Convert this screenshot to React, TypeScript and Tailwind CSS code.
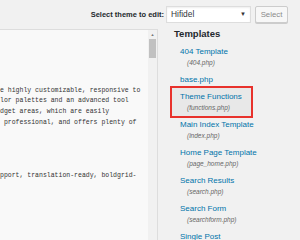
import React from 'react';

const templates = [
  { name: '404 Template', file: '404.php' },
  { name: 'base.php' },
  { name: 'Theme Functions', file: 'functions.php', active: true },
  { name: 'Main Index Template', file: 'index.php' },
  { name: 'Home Page Template', file: 'page_home.php' },
  { name: 'Search Results', file: 'search.php' },
  { name: 'Search Form', file: 'searchform.php' },
  { name: 'Single Post', file: 'single.php' },
];

const codeLines = [
  '',
  '',
  '',
  '',
  '',
  'e highly customizable, responsive to',
  'lor palettes and an advanced tool',
  'dget areas, which are easily',
  ' professional, and offers plenty of',
  '',
  '',
  '',
  '',
  'pport, translation-ready, boldgrid-',
  '',
  '',
  '',
  '',
  '',
];

const App: React.FC = () => {
  return (
    <div className="w-[300px] h-[240px] overflow-hidden bg-[#f1f1f1] font-['Liberation_Sans',Arial,sans-serif] flex flex-col">
      {/* Theme picker bar */}
      <div className="h-[29px] shrink-0 flex items-center justify-end pr-[12px]">
        <span className="text-[7.5px] font-bold text-[#23282d] mr-[2px]">Select theme to edit:</span>
        <div className="w-[85px] h-[17px] bg-white border border-[#ddd] flex items-center justify-between pl-[4px] pr-[4px] shadow-[inset_0_1px_2px_rgba(0,0,0,0.07)]">
          <span className="text-[8.4px] text-[#32373c]">Hifidel</span>
          <span className="text-[6px] text-[#333]">▼</span>
        </div>
        <div className="ml-[4px] w-[33px] h-[17px] bg-[#f7f7f7] border border-[#ccc] rounded-[2px] flex items-center justify-center text-[7.8px] text-[#8a8a8a] shadow-[0_1px_0_#ccc]">
          Select
        </div>
      </div>

      <div className="flex flex-1 min-h-0">
        {/* Editor */}
        <div className="w-[158px] shrink-0 bg-[#f9f9f9] border-t border-r border-[#ddd] flex">
          <pre className="flex-1 overflow-hidden font-['Liberation_Mono',monospace] text-[6.5px] leading-[10.7px] text-[#333] pt-[2px] whitespace-pre">
            {codeLines.join('\n')}
          </pre>
          <div className="w-[9px] bg-[#f1f1f1] flex flex-col items-center pt-[3px]">
            <span className="text-[4px] leading-[4px] text-[#777]">▲</span>
            <div className="mt-[2px] w-[7px] h-[19px] bg-[#c1c1c1]"></div>
          </div>
        </div>

        {/* Templates list */}
        <div className="flex-1 pl-[16px]">
          <h2 className="text-[9.5px] font-bold text-[#23282d] leading-[10px] mb-[4px]">Templates</h2>
          <ul className="-ml-[2px]">
            {templates.map((t) => (
              <li
                key={t.name}
                className={
                  'w-[79px] pl-[8px] py-[3px] whitespace-nowrap ' +
                  (t.active ? 'bg-[#e8e8e8] outline-2 outline-[#e8322c]' : '')
                }
              >
                <div className="text-[8px] leading-[11px] text-[#0073aa]">{t.name}</div>
                {t.file && (
                  <div className="pl-[7px] text-[6.5px] leading-[11px] italic text-[#666]">({t.file})</div>
                )}
              </li>
            ))}
          </ul>
        </div>
      </div>
    </div>
  );
};

export default App;
